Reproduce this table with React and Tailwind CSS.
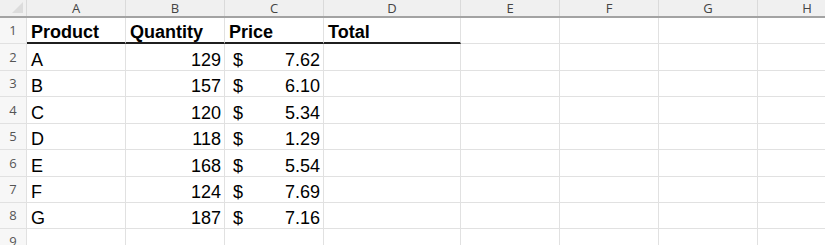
import React from 'react'

const cols = [
  { label: 'A', w: 'w-[99px]' },
  { label: 'B', w: 'w-[99px]' },
  { label: 'C', w: 'w-[99px]' },
  { label: 'D', w: 'w-[137px]' },
  { label: 'E', w: 'w-[99px]' },
  { label: 'F', w: 'w-[99px]' },
  { label: 'G', w: 'w-[99px]' },
  { label: 'H', w: 'w-[99px]' },
]

const data = [
  ['A', 129, '7.62'],
  ['B', 157, '6.10'],
  ['C', 120, '5.34'],
  ['D', 118, '1.29'],
  ['E', 168, '5.54'],
  ['F', 124, '7.69'],
  ['G', 187, '7.16'],
]

const rowHeights = ['h-[27px]', 'h-[26px]', 'h-[27px]', 'h-[26px]', 'h-[27px]', 'h-[26px]', 'h-[26px]']

const cell = 'shrink-0 flex items-end border-r border-b border-[#e1e1e1] pb-0 leading-[20px]'

const RowNum = ({ n }) => (
  <div className="w-[27px] shrink-0 flex items-center justify-center border-r border-b border-[#e1e1e1] bg-[#f7f7f7] text-[13px] leading-none text-[#555] font-['Open_Sans',sans-serif]">
    {n}
  </div>
)

const Empty = ({ w, extra = '' }) => <div className={`${cell} ${w} ${extra}`} />

export default function App() {
  return (
    <div className="w-[825px] h-[245px] overflow-hidden bg-white font-['Liberation_Sans',Arial,sans-serif] text-[18px] text-black">
      {/* column header */}
      <div className="flex h-[18px] bg-[#f0f0f0] border-b-[2px] border-[#a3a3a3]">
        <div className="w-[27px] shrink-0 border-r border-[#dadada] relative overflow-hidden">
          <div className="absolute right-[3px] bottom-[3px] w-0 h-0 border-l-[11px] border-l-transparent border-b-[11px] border-b-[#dcdcdc]" />
        </div>
        {cols.map((c) => (
          <div
            key={c.label}
            className={`${c.w} shrink-0 flex items-center justify-center border-r border-[#dadada] text-[13px] leading-none text-[#444] font-['Open_Sans',sans-serif]`}
          >
            {c.label}
          </div>
        ))}
      </div>

      {/* row 1 */}
      <div className="flex h-[26px]">
        <RowNum n={1} />
        <div className={`${cell} w-[99px] pl-[4px] font-bold border-b-[2px] border-b-[#1f1f1f]`}>Product</div>
        <div className={`${cell} w-[99px] pl-[4px] font-bold border-b-[2px] border-b-[#1f1f1f]`}>Quantity</div>
        <div className={`${cell} w-[99px] pl-[4px] font-bold border-b-[2px] border-b-[#1f1f1f]`}>Price</div>
        <div className={`${cell} w-[137px] pl-[4px] font-bold border-b-[2px] border-b-[#1f1f1f]`}>Total</div>
        {cols.slice(4).map((c) => (
          <Empty key={c.label} w={c.w} />
        ))}
      </div>

      {data.map(([p, q, price], i) => (
        <div key={p} className={`flex ${rowHeights[i]}`}>
          <RowNum n={i + 2} />
          <div className={`${cell} w-[99px] pl-[4px]`}>{p}</div>
          <div className={`${cell} w-[99px] justify-end pr-[3px]`}>{q}</div>
          <div className={`${cell} w-[99px] justify-between pl-[8px] pr-[3px]`}>
            <span>$</span>
            <span>{price}</span>
          </div>
          {cols.slice(3).map((c) => (
            <Empty key={c.label} w={c.w} />
          ))}
        </div>
      ))}

      <div className="flex h-[26px]">
        <RowNum n={9} />
        {cols.map((c) => (
          <Empty key={c.label} w={c.w} />
        ))}
      </div>
    </div>
  )
}
